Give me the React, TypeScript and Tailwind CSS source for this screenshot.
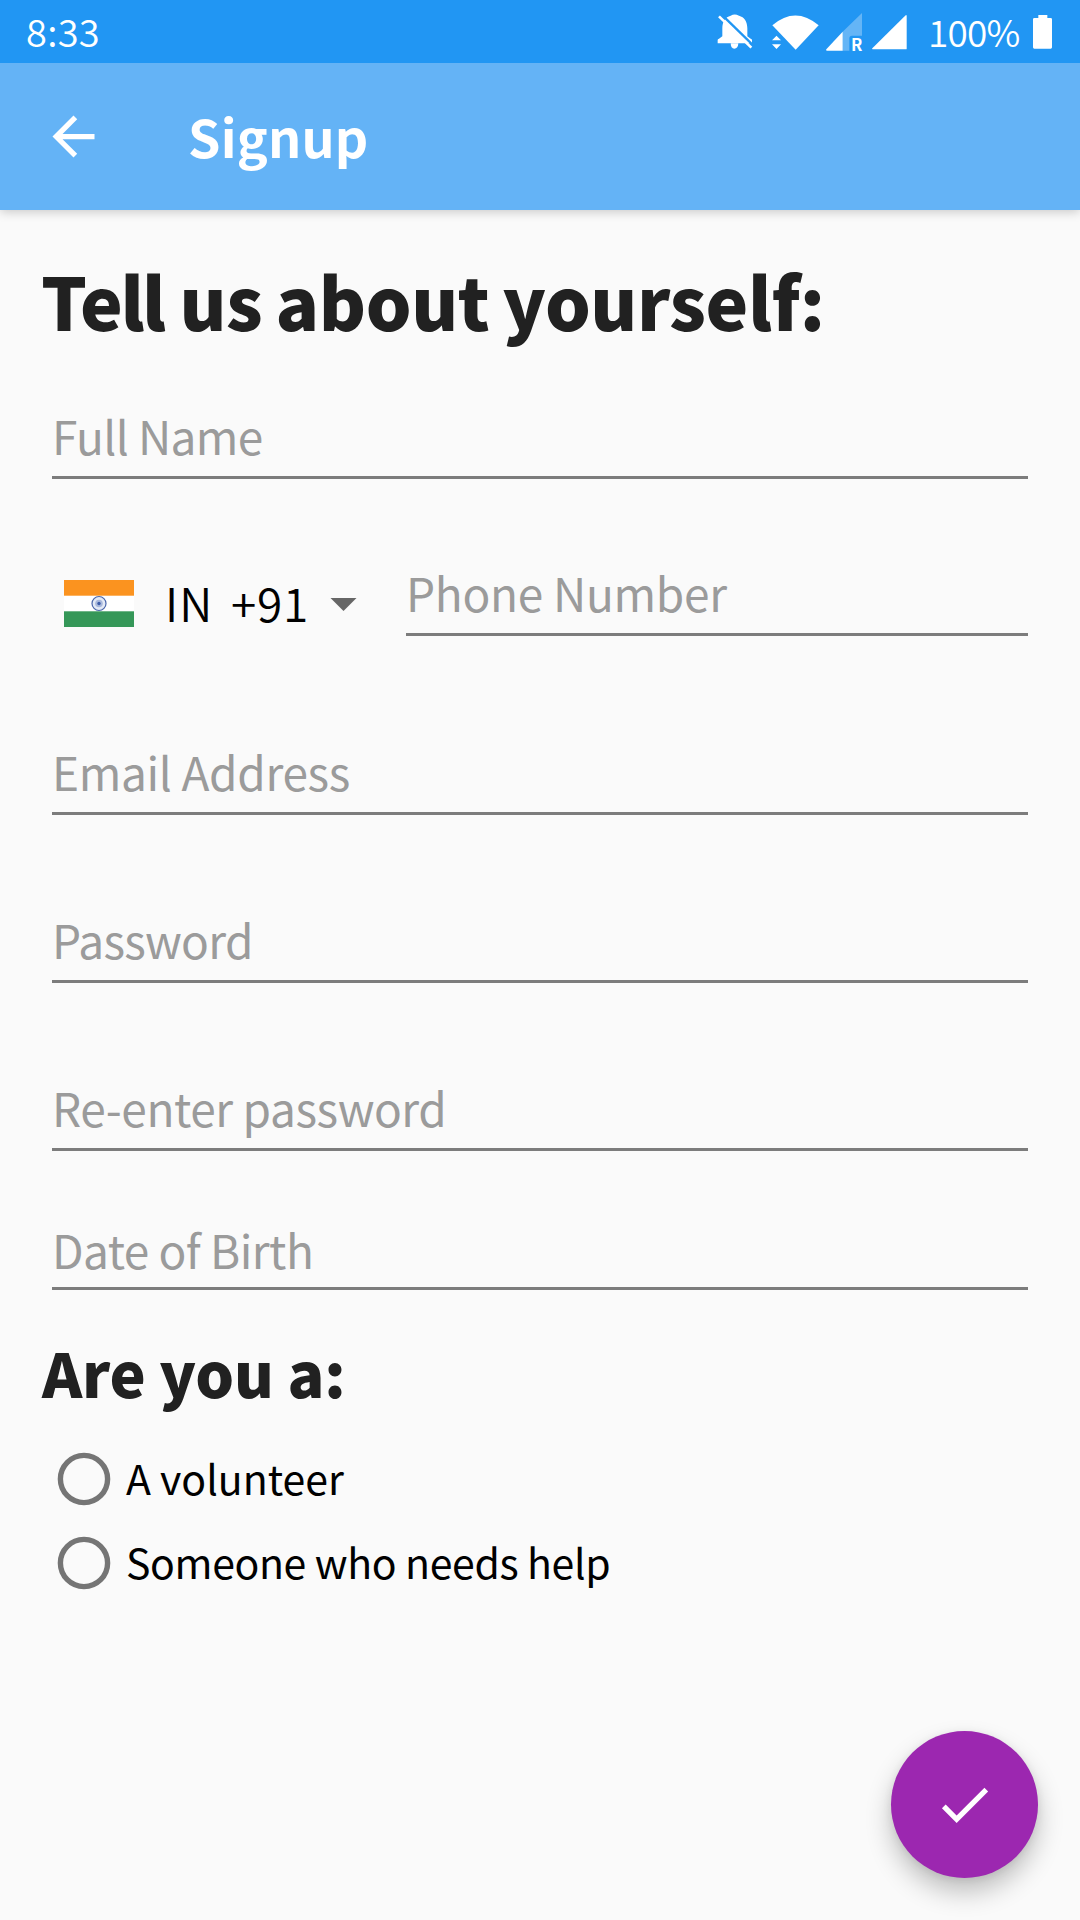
import { useState } from 'react';

function StatusBar() {
  return (
    <div className="relative z-10 h-[63px] bg-[#2196f3] text-white flex items-center pl-[26px] pr-[27px]">
      <span className="-mt-[2px] text-[38px] leading-[40px] font-[350] tracking-[0.3px]">8:33</span>
      <div className="ml-auto flex items-center">
        <svg className="w-[36px] h-[40px] mr-[18px]" viewBox="51 33 108 120" fill="#fff">
          <path d="M53 127v-10q0-3 4-4l10-7V82c0-20 9-34 25-38q12-7 25 0c16 4 25 18 25 38v24l10 7q4 1 4 4v10z" />
          <path d="M92 127h23c0 10-5 16-12 16s-11-6-11-16z" />
          <path d="M62 38l100 97" stroke="#2196f3" strokeWidth="7" />
          <path d="M57 46l97 94" stroke="#fff" strokeWidth="8" />
        </svg>
        <svg className="w-[49px] h-[40px] mr-[5px]" viewBox="213 33 147 120" fill="#fff">
          <path d="M217 73Q286 14 356 73L287 146z" />
          <path d="M216 118h27l-13.500-14zM216 130h27l-13.500 14z" />
        </svg>
        <svg className="w-[38px] h-[56px] mr-[8px]" viewBox="375 9 114 168" fill="#fff">
          <path d="M428 92L486 36v68h-30q-8 0-8 8v37h-20z" fill="#64b5f6" />
          <path d="M428 92v57h-48q-3-1-1-4z" />
          <text x="453" y="149" fontSize="50" fontWeight="700">R</text>
        </svg>
        <svg className="w-[36px] h-[40px]" viewBox="514 33 108 120" fill="#fff">
          <path d="M519 145h100q2 0 2-2V43q-1-1-3 0L518 142q-2 3 1 3z" />
        </svg>
        <span className="w-[125px] -mt-[2px] pl-[21px] text-[37px] leading-[40px] font-[350] tracking-[-0.8px]">100%</span>
        <svg className="w-[21px] h-[40px]" viewBox="996 33 63 120" fill="#fff">
          <path d="M1015 42h27v9h10q4 0 4 4v84q0 4-4 4h-49q-4 0-4-4V55q0-4 4-4h12z" />
        </svg>
      </div>
    </div>
  );
}

function IndiaFlag() {
  return (
    <svg className="w-[70px] h-[47px]" viewBox="0 0 70 47">
      <rect width="70" height="47" fill="#fff" />
      <rect width="70" height="15.700" fill="#fb931f" />
      <rect y="31.300" width="70" height="15.700" fill="#359758" />
      <circle cx="35" cy="23.500" r="7" fill="#e3e9f5" stroke="#4a66ab" strokeWidth="1.200" />
      <circle cx="35" cy="23.500" r="3.800" fill="#a9b9dc" />
      <circle cx="35" cy="23.500" r="1.700" fill="#3d5ca8" />
    </svg>
  );
}

function Field({ label, className }: { label: string; className: string }) {
  return (
    <label className="block h-[74px] border-b-[3px] border-[#7c7c7c] pt-[6px] text-[46px] leading-[48px] text-[#9b9b9b] whitespace-nowrap">
      <span className={className}>{label}</span>
    </label>
  );
}

const roles = [
  { id: 'volunteer', label: 'A volunteer', className: 'tracking-normal' },
  { id: 'help', label: 'Someone who needs help', className: 'tracking-[-0.37px]' },
];

export default function App() {
  const [role, setRole] = useState('');

  return (
    <div className="relative w-[1080px] h-[1920px] overflow-hidden bg-[#fafafa] font-['Noto_Sans_CJK_SC','Noto_Sans',sans-serif]">
      <StatusBar />

      <header className="h-[147px] bg-[#64b3f6] text-white flex items-center pl-[42px] shadow-[0_2px_10px_rgba(0,0,0,0.2)]">
        <svg className="w-[63px] h-[63px]" viewBox="0 0 24 24" fill="#fff">
          <path d="M20 11H7.830l5.590-5.590L12 4l-8 8 8 8 1.410-1.410L7.830 13H20v-2z" />
        </svg>
        <h1 className="ml-[83px] -mt-[2px] text-[52px] leading-[60px] font-bold tracking-[0.2px]">Signup</h1>
      </header>

      <main className="flex flex-col pt-[50px]">
        <h2 className="pl-[41px] text-[72px] leading-[80px] font-black text-[#212121] tracking-[-0.4px] [word-spacing:-3px] whitespace-nowrap">
          <span className="tracking-[-7px]">T</span>
          <span className="mr-[3px] tracking-[-2.5px]">ell</span> us about yourself:
        </h2>

        <div className="mx-[52px] mt-[65px]">
          <Field label="Full Name" className="tracking-[-0.6px]" />

          <div className="mt-[83px] flex">
            <div className="flex w-[354px] pt-[18px] pl-[12px]">
              <IndiaFlag />
              <div className="ml-[31px] -mt-[2px] text-[46px] leading-[48px] font-[350] text-black flex">
                <span className="w-[66px] tracking-[1px]">IN</span>
                <span className="w-[99px] tracking-[0.7px]">+91</span>
              </div>
              <svg className="w-[27px] h-[13px] mt-[18px]" viewBox="0 0 26 13" fill="#666">
                <path d="M0 0h26L13 13z" />
              </svg>
            </div>
            <div className="flex-1">
              <Field label="Phone Number" className="tracking-[-0.3px]" />
            </div>
          </div>

          <div className="mt-[105px]">
            <Field label="Email Address" className="tracking-[-0.35px]" />
          </div>
          <div className="mt-[94px]">
            <Field label="Password" className="tracking-[-0.7px]" />
          </div>
          <div className="mt-[94px]">
            <Field label="Re-enter password" className="tracking-[-0.43px]" />
          </div>
          <div className="mt-[65px]">
            <Field label="Date of Birth" className="relative top-[3px] tracking-[-0.55px]" />
          </div>
        </div>

        <h3 className="mt-[47px] pl-[42px] text-[61px] leading-[70px] font-black text-[#212121] tracking-[-0.2px]">
          Are you a:
        </h3>

        <div className="mt-[30px] pl-[57px]">
          {roles.map((r) => (
            <button key={r.id} onClick={() => setRole(r.id)} className="flex h-[84px] items-center">
              <svg className="w-[54px] h-[54px]" viewBox="0 0 54 54" fill="none">
                <circle cx="27" cy="27" r="23.600" stroke="#757575" strokeWidth="5.400" />
                {role === r.id && <circle cx="27" cy="27" r="13" fill="#757575" />}
              </svg>
              <span className="ml-[15px] -mt-[4px] text-[41px] leading-[48px] text-black whitespace-nowrap">
                <span className={r.className}>{r.label}</span>
              </span>
            </button>
          ))}
        </div>
      </main>

      <button className="absolute left-[891px] top-[1731px] w-[147px] h-[147px] rounded-full bg-[#9c27b0] flex items-center justify-center shadow-[0_14px_26px_rgba(0,0,0,0.24),0_2px_8px_rgba(0,0,0,0.08)]">
        <svg className="w-[63px] h-[63px]" viewBox="0 0 24 24" fill="#fff">
          <path d="M9 16.170L4.830 12l-1.420 1.410L9 19 21 7l-1.410-1.410z" />
        </svg>
      </button>
    </div>
  );
}
